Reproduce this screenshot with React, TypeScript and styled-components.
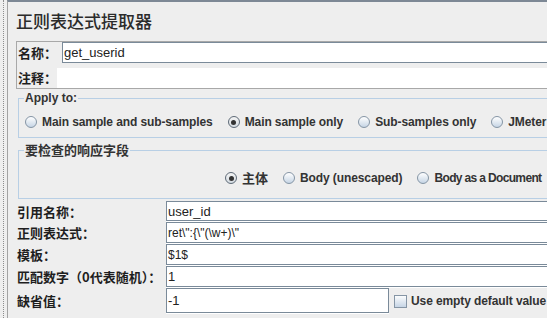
import React from 'react';
import styled, { createGlobalStyle } from 'styled-components';

const GlobalStyle = createGlobalStyle`
  html, body {
    margin: 0;
    padding: 0;
    background: #eeeeee;
  }
  body {
    width: 547px;
    height: 318px;
    overflow: hidden;
    font-family: "Liberation Sans", "Noto Sans CJK SC", sans-serif;
  }
`;

const LATIN = `"Liberation Sans", "Noto Sans CJK SC", sans-serif`;
const CJK = `"Noto Sans CJK SC", "Liberation Sans", sans-serif`;

const Page = styled.div`
  display: flex;
  width: 547px;
  height: 318px;
  overflow: hidden;
  background: #eeeeee;
`;

const SideStrip = styled.div`
  flex: 0 0 7px;
  box-sizing: border-box;
  padding-left: 3px;
  &::before {
    content: "";
    display: block;
    height: 100%;
    border-left: 1px dotted #8c8c8c;
  }
`;

const Main = styled.main`
  flex: 1 1 auto;
  min-width: 0;
  border-top: 2px solid #7d8895;
  border-left: 1px solid #a3a3a3;
  padding: 7px 0 0 8px;
  display: flex;
  flex-direction: column;
`;

const Title = styled.h1`
  margin: 0;
  font: 500 17px/24px ${CJK};
  color: #2b2b2b;
  white-space: nowrap;
`;

const NamePanel = styled.section`
  margin: 8px -20px 0 0;
  border: 1px solid #a8a8a8;
  display: flex;
  flex-direction: column;
  gap: 5px;
`;

const PanelRow = styled.div<{ $h: number }>`
  display: flex;
  align-items: center;
  height: ${(p) => p.$h}px;
`;

const Label = styled.label<{ $w: number }>`
  flex: none;
  box-sizing: border-box;
  width: ${(p) => p.$w}px;
  padding-left: 1px;
  font: 700 13px/16px ${CJK};
  color: #1e1e1e;
  white-space: nowrap;
`;

const TextField = styled.div<{ $size?: number }>`
  flex: 1;
  align-self: stretch;
  box-sizing: border-box;
  border: 1px solid #7a8a99;
  background: #ffffff;
  padding-left: 1px;
  display: flex;
  align-items: center;
  font: 400 ${(p) => p.$size ?? 13}px ${LATIN};
  color: #222222;
  white-space: nowrap;
`;

const CommentArea = styled.div`
  flex: 1;
  align-self: stretch;
  background: #ffffff;
`;

const Group = styled.fieldset<{ $mt: number }>`
  margin: ${(p) => p.$mt}px -20px 0 2px;
  padding: 0;
  min-width: 0;
  border: 1px solid #b8cfe5;
`;

const GroupTitle = styled.legend<{ $cjk?: boolean }>`
  margin-left: 5px;
  padding: 0 1px;
  font: 700 ${(p) => (p.$cjk ? `13px/16px ${CJK}` : `12px/14px ${LATIN}`)};
  color: #333333;
  white-space: nowrap;
`;

const RadioRow = styled.div<{ $pad: string }>`
  display: flex;
  align-items: center;
  gap: 15px;
  height: 16px;
  padding: ${(p) => p.$pad};
  white-space: nowrap;
`;

const RadioItem = styled.span<{ $cjk?: boolean; $track?: number }>`
  display: inline-flex;
  align-items: center;
  gap: 5px;
  flex: none;
  font: 700 ${(p) => (p.$cjk ? `13px/16px ${CJK}` : `12px/16px ${LATIN}`)};
  letter-spacing: ${(p) => (p.$cjk ? 0 : p.$track ?? -0.1)}px;
  color: #333333;
`;

const RadioCircle = styled.span<{ $checked?: boolean }>`
  flex: none;
  box-sizing: border-box;
  width: 12px;
  height: 12px;
  border-radius: 50%;
  border: 1px solid ${(p) => (p.$checked ? '#5f6b78' : '#8595a5')};
  background: ${(p) =>
    p.$checked
      ? 'linear-gradient(to bottom, #f4f4f4, #d4dbe2)'
      : 'linear-gradient(to bottom, #ffffff, #c6d5e5)'};
  display: inline-flex;
  align-items: center;
  justify-content: center;
  &::after {
    content: "";
    width: 5px;
    height: 5px;
    border-radius: 50%;
    background: #333333;
    display: ${(p) => (p.$checked ? 'block' : 'none')};
  }
`;

const FormRows = styled.div`
  margin: 2px -20px 0 0;
  display: flex;
  flex-direction: column;
`;

const FormRow = styled.div<{ $h: number }>`
  display: flex;
  align-items: flex-start;
  height: ${(p) => p.$h}px;
`;

const RowLabel = styled.label`
  flex: none;
  box-sizing: border-box;
  width: 150px;
  align-self: center;
  padding-left: 1px;
  font: 700 13px/16px ${CJK};
  color: #1e1e1e;
  white-space: nowrap;
`;

const FormField = styled.div<{ $size?: number; $w?: number }>`
  flex: ${(p) => (p.$w ? 'none' : '1')};
  width: ${(p) => (p.$w ? `${p.$w}px` : 'auto')};
  height: calc(100% - 1px);
  box-sizing: border-box;
  border: 1px solid #7a8a99;
  box-shadow: 0 1px 0 #ffffff;
  background: #ffffff;
  padding-left: 1px;
  display: flex;
  align-items: center;
  font: 400 ${(p) => p.$size ?? 13}px ${LATIN};
  color: #222222;
  white-space: nowrap;
`;

const CheckItem = styled.span`
  display: inline-flex;
  align-items: center;
  gap: 4px;
  margin-left: 5px;
  align-self: center;
  font: 700 12px/16px ${LATIN};
  letter-spacing: -0.1px;
  color: #333333;
  white-space: nowrap;
`;

const CheckBox = styled.span`
  flex: none;
  box-sizing: border-box;
  width: 13px;
  height: 13px;
  border: 1px solid #8595a5;
  background: linear-gradient(to bottom, #fbfcfd, #c6d5e5);
`;

const Radio: React.FC<{ label: string; checked?: boolean; cjk?: boolean; track?: number }> = ({
  label,
  checked,
  cjk,
  track,
}) => (
  <RadioItem $cjk={cjk} $track={track}>
    <RadioCircle $checked={checked} />
    {label}
  </RadioItem>
);

export default function App() {
  return (
    <>
      <GlobalStyle />
      <Page>
        <SideStrip />
        <Main>
          <Title>正则表达式提取器</Title>
          <NamePanel>
            <PanelRow $h={21}>
              <Label $w={45}>名称：</Label>
              <TextField>get_userid</TextField>
            </PanelRow>
            <PanelRow $h={20}>
              <Label $w={40}>注释：</Label>
              <CommentArea />
            </PanelRow>
          </NamePanel>

          <Group $mt={2}>
            <GroupTitle>Apply to:</GroupTitle>
            <RadioRow $pad="9px 0 7px 6px">
              <Radio label="Main sample and sub-samples" />
              <Radio label="Main sample only" checked />
              <Radio label="Sub-samples only" />
              <Radio label="JMeter" />
            </RadioRow>
          </Group>

          <Group $mt={4}>
            <GroupTitle $cjk>要检查的响应字段</GroupTitle>
            <RadioRow $pad="12px 0 12px 206px">
              <Radio label="主体" checked cjk />
              <Radio label="Body (unescaped)" />
              <Radio label="Body as a Document" track={-0.65} />
            </RadioRow>
          </Group>

          <FormRows>
            <FormRow $h={21}>
              <RowLabel>引用名称：</RowLabel>
              <FormField>user_id</FormField>
            </FormRow>
            <FormRow $h={22}>
              <RowLabel>正则表达式：</RowLabel>
              <FormField $size={12}>{'ret\\":{\\"(\\w+)\\"'}</FormField>
            </FormRow>
            <FormRow $h={22}>
              <RowLabel>模板：</RowLabel>
              <FormField $size={12}>$1$</FormField>
            </FormRow>
            <FormRow $h={22}>
              <RowLabel>匹配数字（0代表随机）：</RowLabel>
              <FormField>1</FormField>
            </FormRow>
            <FormRow $h={26}>
              <RowLabel>缺省值：</RowLabel>
              <FormField $w={223}>-1</FormField>
              <CheckItem>
                <CheckBox />
                Use empty default value
              </CheckItem>
            </FormRow>
          </FormRows>
        </Main>
      </Page>
    </>
  );
}
